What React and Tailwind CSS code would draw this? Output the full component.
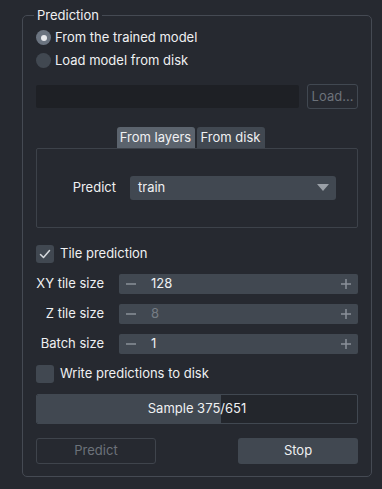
import React from "react";

function Radio({ checked, label }) {
  return (
    <div className="flex items-center h-[23px] gap-[4px]">
      <span
        className={
          "w-[15px] h-[15px] rounded-full flex items-center justify-center " +
          (checked ? "bg-[#6b7480]" : "bg-[#414851]")
        }
      >
        {checked && <span className="w-[6px] h-[6px] rounded-full bg-[#e8eaed]" />}
      </span>
      <span>{label}</span>
    </div>
  );
}

function Checkbox({ checked, label }) {
  return (
    <div className="flex items-center gap-[6px] h-[18px]">
      <span className="w-[18px] h-[18px] rounded-[3px] bg-[#414851] flex items-center justify-center">
        {checked && (
          <svg width="12" height="12" viewBox="0 0 12 12" fill="none">
            <path d="M1.5 6.5 L4.5 9.5 L10.5 2.5" stroke="#d6d9dd" strokeWidth="1.5" strokeLinecap="round" strokeLinejoin="round" />
          </svg>
        )}
      </span>
      <span>{label}</span>
    </div>
  );
}

function SpinRow({ label, value, disabled }) {
  return (
    <div className="flex items-center h-[20px]">
      <span className="w-[69px] text-right pr-[1px]">{label}</span>
      <div className="ml-[14px] flex-1 h-[20px] rounded-[2px] bg-[#414851] flex items-center px-[6px]">
        <svg width="12" height="12" viewBox="0 0 12 12">
          <path d="M1 6 H11" stroke="#8a9099" strokeWidth="1.5" />
        </svg>
        <span className={"ml-[14px] flex-1 " + (disabled ? "text-[#767c84]" : "")}>{value}</span>
        <svg width="12" height="12" viewBox="0 0 12 12">
          <path d="M1 6 H11 M6 1 V11" stroke="#8a9099" strokeWidth="1.5" />
        </svg>
      </div>
    </div>
  );
}

export default function App() {
  return (
    <div
      className="w-[382px] h-[489px] bg-[#262930] text-[#eff0f2] text-[13px] pt-[15px] pl-[22px]"
      style={{ fontFamily: "Inter, 'Noto Sans', sans-serif" }}
    >
      <div className="relative w-[350px] h-[462px] border border-[#454a53] rounded-[5px] px-[13px] pt-[10px]">
        {/* Title */}
        <span className="absolute -top-[9px] left-[11px] px-[3px] bg-[#262930] leading-[16px]">Prediction</span>

        <Radio checked label="From the trained model" />
        <Radio label="Load model from disk" />

        <div className="flex items-center gap-[8px] mt-[12px]">
          <div className="w-[263px] h-[23px] bg-[#1e2025] rounded-[2px]" />
          <button className="w-[51px] h-[25px] border border-[#414851] rounded-[3px] text-[#6c727a]">Load...</button>
        </div>

        {/* Tabs */}
        <div className="mt-[18px] flex justify-center gap-[2px] pr-[13px] h-[21px]">
          <div className="w-[78px] bg-[#5b636d] rounded-t-[3px] flex items-center justify-center">From layers</div>
          <div className="w-[68px] bg-[#414851] rounded-t-[3px] flex items-center justify-center">From disk</div>
        </div>
        <div className="h-[80px] border border-[#3d424a] rounded-[2px] flex items-center">
          <span className="w-[79px] text-right">Predict</span>
          <div className="ml-[14px] w-[206px] h-[24px] bg-[#414851] rounded-[3px] flex items-center pl-[8px] pr-[7px]">
            <span className="flex-1">train</span>
            <svg width="12" height="8" viewBox="0 0 12 8">
              <path d="M0 0 H12 L6 7 Z" fill="#9aa0a7" />
            </svg>
          </div>
        </div>

        <div className="mt-[17px]">
          <Checkbox checked label="Tile prediction" />
        </div>

        <div className="mt-[11px] flex flex-col gap-[10px]">
          <SpinRow label="XY tile size" value="128" />
          <SpinRow label="Z tile size" value="8" disabled />
          <SpinRow label="Batch size" value="1" />
        </div>

        <div className="mt-[11px]">
          <Checkbox label="Write predictions to disk" />
        </div>

        {/* Progress */}
        <div className="mt-[11px] relative h-[30px] border border-[#414851] rounded-[2px] overflow-hidden flex items-center justify-center bg-[#23262c]">
          <div className="absolute left-0 top-0 bottom-0 bg-[#414851]" style={{ width: `${(375 / 651) * 100}%` }} />
          <span className="relative">Sample 375/651</span>
        </div>

        <div className="mt-[14px] flex justify-between">
          <button className="w-[120px] h-[26px] border border-[#3f444c] rounded-[3px] text-[#6c727a]">Predict</button>
          <button className="w-[120px] h-[26px] bg-[#414851] rounded-[3px]">Stop</button>
        </div>
      </div>
    </div>
  );
}
